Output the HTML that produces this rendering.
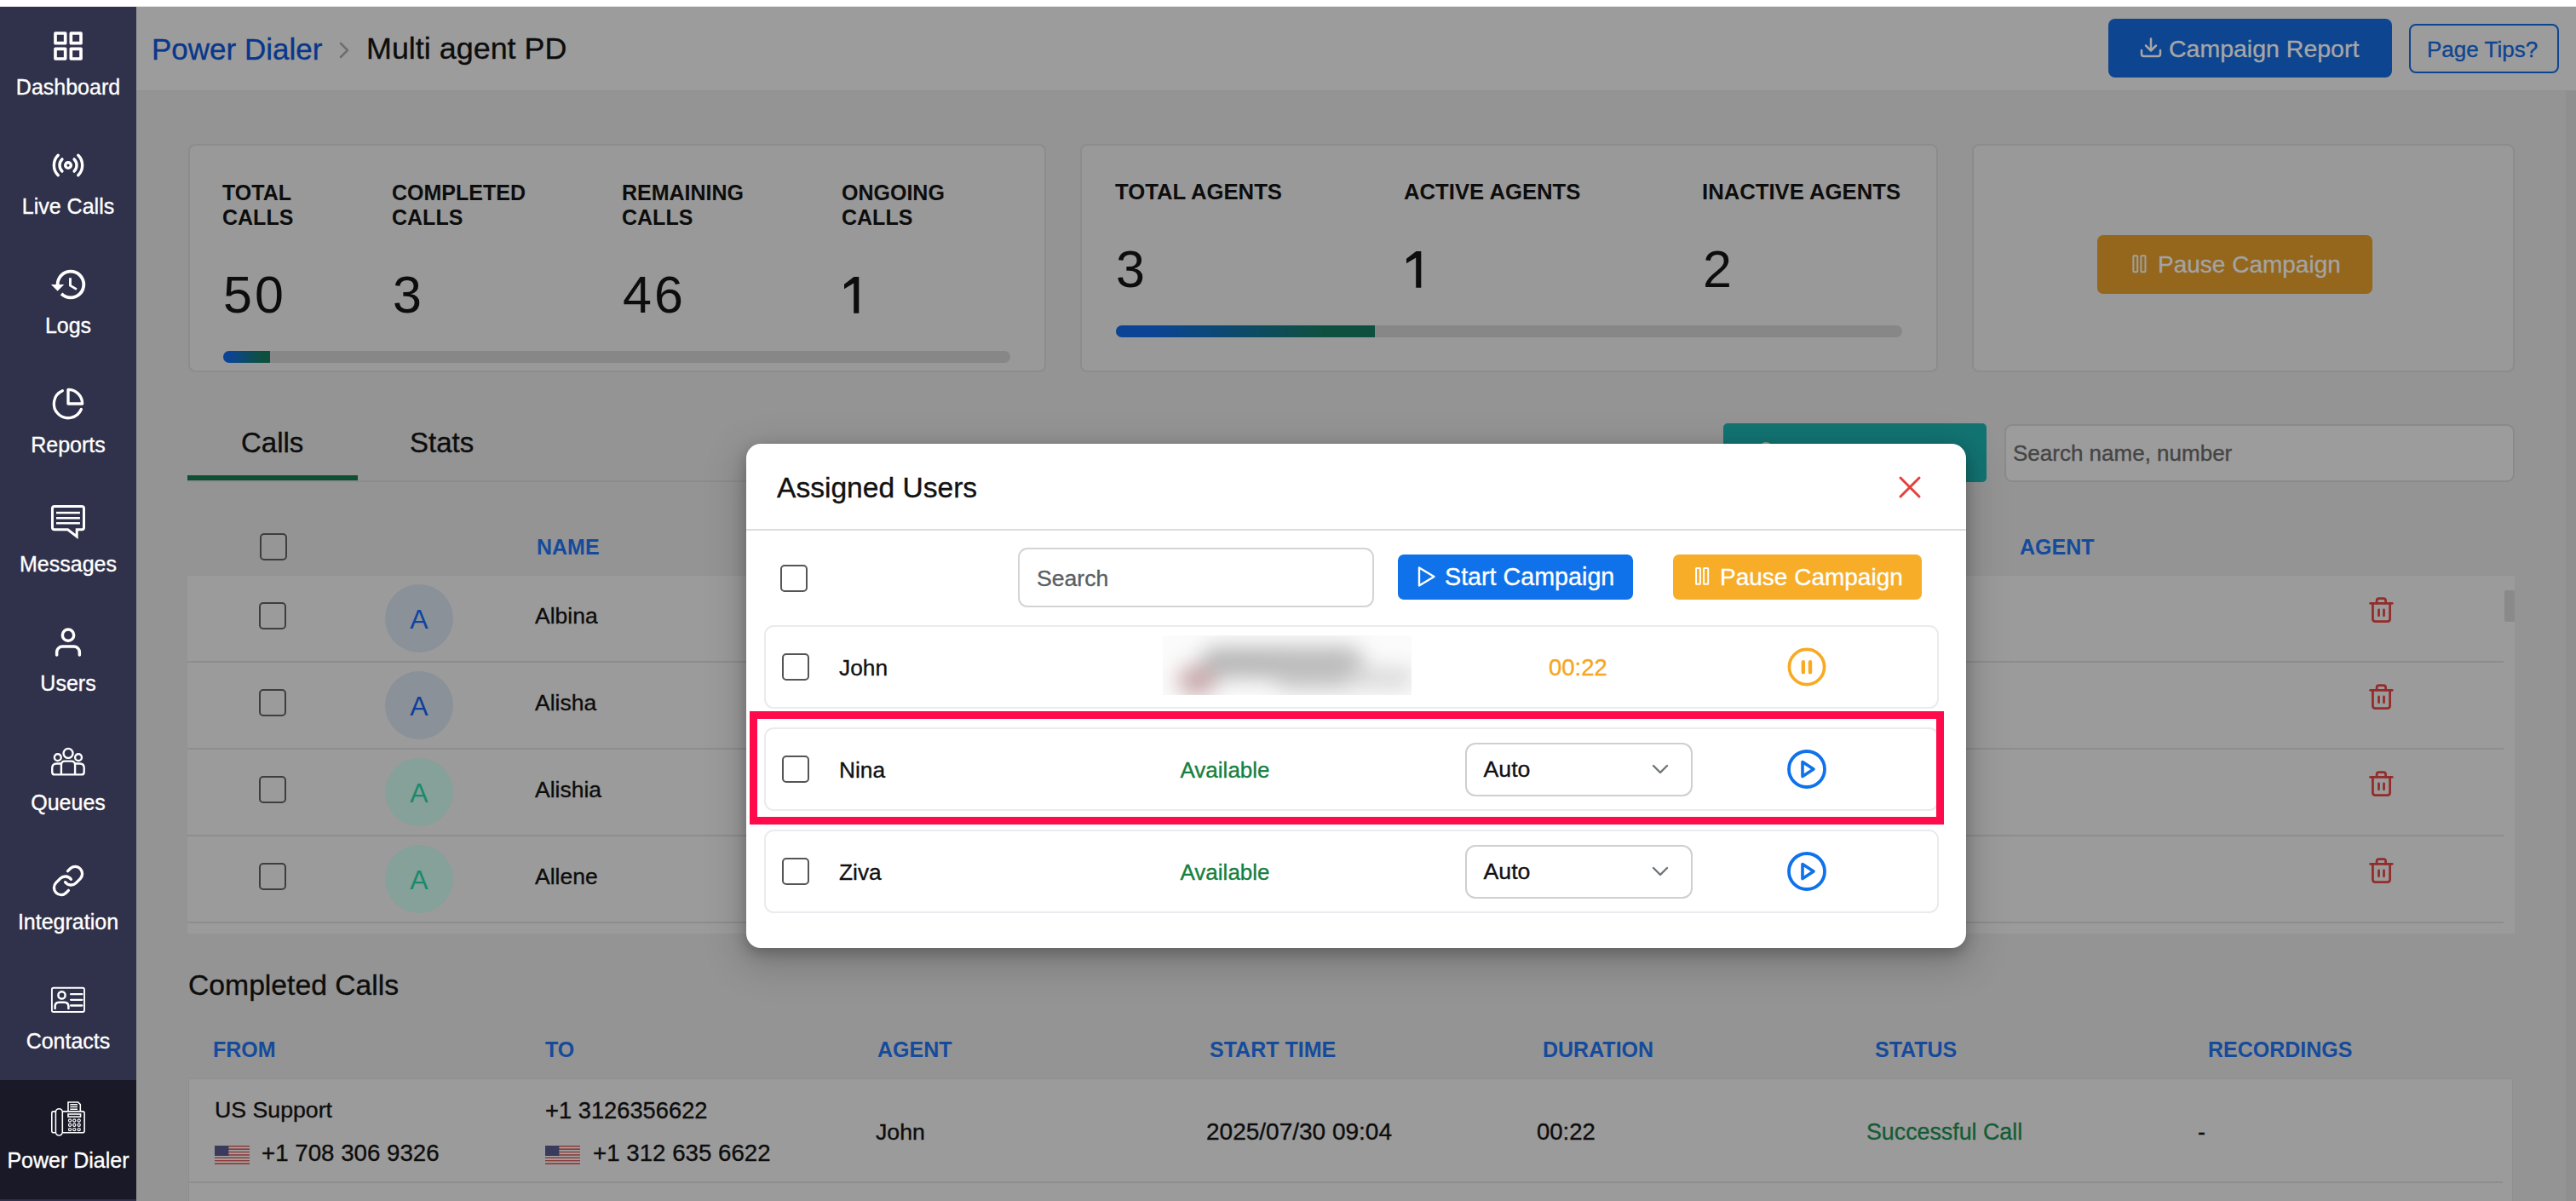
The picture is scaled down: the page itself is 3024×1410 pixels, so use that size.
<!DOCTYPE html>
<html><head><meta charset="utf-8"><title>Power Dialer</title>
<style>
html,body{margin:0;padding:0;}
body{width:3024px;height:1410px;position:relative;overflow:hidden;background:#969696;font-family:"Liberation Sans", sans-serif;}
.t{position:absolute;white-space:nowrap;}
.s{-webkit-text-stroke:0.35px currentColor;}
.r{position:absolute;}
</style></head><body>
<div class="r" style="left:0px;top:0px;width:3024px;height:8px;background:#ffffff;"></div>
<div class="r" style="left:0px;top:7px;width:3024px;height:1px;background:#e6e6e6;"></div>
<div class="r" style="left:160px;top:8px;width:2864px;height:98px;background:#9c9c9c;"></div>
<div class="r" style="left:160px;top:106px;width:2864px;height:2px;background:#939393;"></div>
<div class="r" style="left:160px;top:108px;width:2864px;height:1302px;background:#949494;"></div>
<div class="r" style="left:3012px;top:106px;width:12px;height:1304px;background:#8f8f8f;"></div>
<div class="r" style="left:0px;top:8px;width:160px;height:1402px;background:#30314a;"></div>
<div class="r" style="left:0px;top:1268px;width:160px;height:140px;background:#191927;"></div>
<div class="t s" style="left:0px;top:89.84px;font-size:25px;line-height:25px;color:#ffffff;font-weight:400;width:160px;text-align:center;">Dashboard</div>
<div class="t s" style="left:0px;top:229.84px;font-size:25px;line-height:25px;color:#ffffff;font-weight:400;width:160px;text-align:center;">Live Calls</div>
<div class="t s" style="left:0px;top:369.84px;font-size:25px;line-height:25px;color:#ffffff;font-weight:400;width:160px;text-align:center;">Logs</div>
<div class="t s" style="left:0px;top:509.84px;font-size:25px;line-height:25px;color:#ffffff;font-weight:400;width:160px;text-align:center;">Reports</div>
<div class="t s" style="left:0px;top:649.84px;font-size:25px;line-height:25px;color:#ffffff;font-weight:400;width:160px;text-align:center;">Messages</div>
<div class="t s" style="left:0px;top:789.84px;font-size:25px;line-height:25px;color:#ffffff;font-weight:400;width:160px;text-align:center;">Users</div>
<div class="t s" style="left:0px;top:929.84px;font-size:25px;line-height:25px;color:#ffffff;font-weight:400;width:160px;text-align:center;">Queues</div>
<div class="t s" style="left:0px;top:1069.84px;font-size:25px;line-height:25px;color:#ffffff;font-weight:400;width:160px;text-align:center;">Integration</div>
<div class="t s" style="left:0px;top:1209.84px;font-size:25px;line-height:25px;color:#ffffff;font-weight:400;width:160px;text-align:center;">Contacts</div>
<div class="t s" style="left:0px;top:1349.84px;font-size:25px;line-height:25px;color:#ffffff;font-weight:400;width:160px;text-align:center;">Power Dialer</div>
<svg class="r" style="left:60px;top:34.3px;width:40px;height:40px;overflow:visible" viewBox="0 0 24 24" fill="none" stroke="#fff" stroke-linecap="round" stroke-linejoin="round" stroke-width="2.2"><rect x="3" y="3" width="7" height="7"/><rect x="14" y="3" width="7" height="7"/><rect x="14" y="14" width="7" height="7"/><rect x="3" y="14" width="7" height="7"/></svg>
<svg class="r" style="left:60px;top:174.3px;width:40px;height:40px;overflow:visible" viewBox="0 0 24 24" fill="none" stroke="#fff" stroke-linecap="round" stroke-linejoin="round" stroke-width="2.05"><circle cx="12" cy="12" r="2"/><path d="M16.24 7.76a6 6 0 0 1 0 8.49m-8.48-.01a6 6 0 0 1 0-8.49m11.31-2.82a10 10 0 0 1 0 14.14m-14.14 0a10 10 0 0 1 0-14.14"/></svg>
<svg class="r" style="left:57.9px;top:310.5px;width:46.08px;height:46.08px;overflow:visible" viewBox="0 0 24 24" ><path fill="#fff" d="M13 3a9 9 0 0 0-9 9H1l3.89 3.89.07.14L9 12H6c0-3.87 3.13-7 7-7s7 3.13 7 7-3.13 7-7 7c-1.93 0-3.68-.79-4.94-2.06l-1.42 1.42A8.954 8.954 0 0 0 13 21a9 9 0 0 0 0-18zm-1 5v5l4.28 2.54.72-1.21-3.5-2.08V8H12z"/></svg>
<svg class="r" style="left:60px;top:454.3px;width:40px;height:40px;overflow:visible" viewBox="0 0 24 24" fill="none" stroke="#fff" stroke-linecap="round" stroke-linejoin="round" stroke-width="2"><path d="M21.21 15.89A10 10 0 1 1 8 2.83"/><path d="M22 12A10 10 0 0 0 12 2v10z"/></svg>
<svg class="r" style="left:50px;top:583px;width:60px;height:60px;overflow:visible" viewBox="0 0 60 60" fill="none" stroke="#fff"><path d="M14 11.54 H46 Q48.5 11.54 48.5 14 V36.3 Q48.5 38.8 46 38.8 H40.2 V47 L29.6 38.8 H14 Q11.45 38.8 11.45 36.3 V14 Q11.45 11.54 14 11.54 Z" stroke-width="3" stroke-linejoin="miter"/><path d="M16 18.95 H43.9 M16 25.2 H43.9 M16 31.2 H43.9" stroke-width="2.6" stroke-linecap="butt"/></svg>
<svg class="r" style="left:60px;top:734.3px;width:40px;height:40px;overflow:visible" viewBox="0 0 24 24" fill="none" stroke="#fff" stroke-linecap="round" stroke-linejoin="round" stroke-width="2.1"><path d="M20 21v-2a4 4 0 0 0-4-4H8a4 4 0 0 0-4 4v2"/><circle cx="12" cy="7" r="4"/></svg>
<svg class="r" style="left:50px;top:863px;width:60px;height:60px;overflow:visible" viewBox="0 0 60 60" fill="none" stroke="#fff" stroke-width="2.4" stroke-linejoin="round"><circle cx="30.06" cy="21.4" r="5.5"/><circle cx="17.8" cy="26.2" r="3.9"/><circle cx="42.05" cy="26.2" r="3.9"/><path d="M21.9 46.4 V35 Q21.9 30.6 26.3 30.6 H33.7 Q38.1 30.6 38.1 35 V46.4"/><path d="M21.9 33.5 H16.25 Q11.25 33.5 11.25 38.5 V43.4 Q11.25 46.4 14.25 46.4 H45.7 Q48.7 46.4 48.7 43.4 V38.5 Q48.7 33.5 43.7 33.5 H38.1"/></svg>
<svg class="r" style="left:60px;top:1014.3px;width:40px;height:40px;overflow:visible" viewBox="0 0 24 24" fill="none" stroke="#fff" stroke-linecap="round" stroke-linejoin="round" stroke-width="2"><path d="M10 13a5 5 0 0 0 7.54.54l3-3a5 5 0 0 0-7.07-7.07l-1.72 1.71"/><path d="M14 11a5 5 0 0 0-7.54-.54l-3 3a5 5 0 0 0 7.07 7.07l1.71-1.71"/></svg>
<svg class="r" style="left:50px;top:1143px;width:60px;height:60px;overflow:visible" viewBox="0 0 60 60" fill="none" stroke="#fff"><rect x="10.9" y="16.7" width="38.1" height="28.3" rx="2" stroke-width="1.9"/><circle cx="22.5" cy="25.4" r="4.1" stroke-width="2.5"/><path d="M14.6 41 V38.5 Q14.6 33.7 19.4 33.7 H25.6 Q30.4 33.7 30.4 38.5 V41" stroke-width="2.5" stroke-linecap="round"/><path d="M33.1 24.2 H46.4 M33.1 30.8 H46.4 M33.1 37.5 H46.4" stroke-width="2.3" stroke-linecap="round"/></svg>
<svg class="r" style="left:50px;top:1283px;width:60px;height:60px;overflow:visible" viewBox="0 0 60 60" fill="none" stroke="#fff" stroke-width="1.6"><rect x="15.4" y="18.7" width="7.9" height="31.3" rx="3.95"/><path d="M15.4 21.9 H12.8 Q10.8 21.9 10.8 23.9 V44.8 Q10.8 46.8 12.8 46.8 H15.4"/><path d="M23.3 21.9 H47.1 Q49.1 21.9 49.1 23.9 V44.8 Q49.1 46.8 47.1 46.8 H23.3"/><path d="M30 21.9 V11 H41.6 L44.3 13.7 V21.9"/><path d="M32.3 13.7 H41 M32.3 16.4 H41 M32.3 19.2 H41" stroke-width="1.5"/><rect x="30" y="25" width="14.55" height="3.1"/><circle cx="32.06" cy="32.5" r="1.6" stroke-width="1.2"/><circle cx="32.06" cy="37.7" r="1.6" stroke-width="1.2"/><circle cx="32.06" cy="43.1" r="1.6" stroke-width="1.2"/><circle cx="37.26" cy="32.5" r="1.6" stroke-width="1.2"/><circle cx="37.26" cy="37.7" r="1.6" stroke-width="1.2"/><circle cx="37.26" cy="43.1" r="1.6" stroke-width="1.2"/><circle cx="42.68" cy="32.5" r="1.6" stroke-width="1.2"/><circle cx="42.68" cy="37.7" r="1.6" stroke-width="1.2"/><circle cx="42.68" cy="43.1" r="1.6" stroke-width="1.2"/></svg>
<div class="t s" style="left:178px;top:40.37px;font-size:35px;line-height:35px;color:#08378b;font-weight:400;">Power Dialer</div>
<svg class="r" style="left:396px;top:48px;width:16px;height:22px" viewBox="0 0 16 22" fill="none" stroke="#6f6f6f" stroke-width="2.6" stroke-linecap="round" stroke-linejoin="round"><path d="M4 3 L12 11 L4 19"/></svg>
<div class="t s" style="left:430px;top:39.61px;font-size:35.9px;line-height:35.9px;color:#0d0d0d;font-weight:400;">Multi agent PD</div>
<div class="r" style="left:2475px;top:22px;width:333px;height:69px;background:#0d4590;border-radius:8px;"></div>
<svg class="r" style="left:2511px;top:43px;width:28px;height:28px" viewBox="0 0 28 28" fill="none" stroke="#a6a6a6" stroke-width="2.5" stroke-linecap="round" stroke-linejoin="round"><path d="M3 16 V20.6 Q3 23 5.4 23 H22.6 Q25 23 25 20.6 V16"/><path d="M14 2.5 V16.5 M8 10.5 L14 16.5 L20 10.5"/></svg>
<div class="t s" style="left:2546px;top:42.87px;font-size:28.5px;line-height:28.5px;color:#a6a6a6;font-weight:400;">Campaign Report</div>
<div class="r" style="left:2828px;top:28px;width:176px;height:58px;border:2px solid #0d4590;border-radius:8px;box-sizing:border-box;"></div>
<div class="t s" style="left:2849px;top:44.99px;font-size:26px;line-height:26px;color:#0d4590;font-weight:400;">Page Tips?</div>
<div class="r" style="left:221px;top:169px;width:1007px;height:268px;background:#999999;border:2px solid #8c8c8c;border-radius:8px;box-sizing:border-box;"></div>
<div class="r" style="left:1268px;top:169px;width:1007px;height:268px;background:#999999;border:2px solid #8c8c8c;border-radius:8px;box-sizing:border-box;"></div>
<div class="r" style="left:2315px;top:169px;width:637px;height:268px;background:#999999;border:2px solid #8c8c8c;border-radius:8px;box-sizing:border-box;"></div>
<div class="t" style="left:261px;top:213.84px;font-size:25px;line-height:25px;color:#0d0d0d;font-weight:700;">TOTAL</div>
<div class="t" style="left:261px;top:243.34px;font-size:25px;line-height:25px;color:#0d0d0d;font-weight:700;">CALLS</div>
<div class="t" style="left:460px;top:213.84px;font-size:25px;line-height:25px;color:#0d0d0d;font-weight:700;">COMPLETED</div>
<div class="t" style="left:460px;top:243.34px;font-size:25px;line-height:25px;color:#0d0d0d;font-weight:700;">CALLS</div>
<div class="t" style="left:730px;top:213.84px;font-size:25px;line-height:25px;color:#0d0d0d;font-weight:700;">REMAINING</div>
<div class="t" style="left:730px;top:243.34px;font-size:25px;line-height:25px;color:#0d0d0d;font-weight:700;">CALLS</div>
<div class="t" style="left:988px;top:213.84px;font-size:25px;line-height:25px;color:#0d0d0d;font-weight:700;">ONGOING</div>
<div class="t" style="left:988px;top:243.34px;font-size:25px;line-height:25px;color:#0d0d0d;font-weight:700;">CALLS</div>
<div class="t" style="left:262px;top:315.86px;font-size:61px;line-height:61px;color:#0d0d0d;font-weight:400;letter-spacing:3px;">50</div>
<div class="t" style="left:461px;top:315.86px;font-size:61px;line-height:61px;color:#0d0d0d;font-weight:400;letter-spacing:3px;">3</div>
<div class="t" style="left:731px;top:315.86px;font-size:61px;line-height:61px;color:#0d0d0d;font-weight:400;letter-spacing:3px;">46</div>
<div class="r" style="left:262px;top:412px;width:924px;height:14px;background:#878787;border-radius:7px;"></div>
<div class="r" style="left:262px;top:412px;width:55px;height:14px;background:linear-gradient(90deg,#0b4494 15%,#0e5040 80%);border-radius:7px 0 0 7px;"></div>
<div class="t" style="left:1309px;top:213.24px;font-size:25.7px;line-height:25.7px;color:#0d0d0d;font-weight:700;">TOTAL AGENTS</div>
<div class="t" style="left:1648px;top:213.24px;font-size:25.7px;line-height:25.7px;color:#0d0d0d;font-weight:700;">ACTIVE AGENTS</div>
<div class="t" style="left:1998px;top:213.24px;font-size:25.7px;line-height:25.7px;color:#0d0d0d;font-weight:700;">INACTIVE AGENTS</div>
<div class="t" style="left:1310px;top:286.36px;font-size:61px;line-height:61px;color:#0d0d0d;font-weight:400;letter-spacing:3px;">3</div>
<div class="t" style="left:1999px;top:286.36px;font-size:61px;line-height:61px;color:#0d0d0d;font-weight:400;letter-spacing:3px;">2</div>
<div class="r" style="left:1310px;top:382px;width:923px;height:14px;background:#878787;border-radius:7px;"></div>
<div class="r" style="left:1310px;top:382px;width:304px;height:14px;background:linear-gradient(90deg,#0b4494 15%,#0e5040 80%);border-radius:7px 0 0 7px;"></div>
<svg class="r" style="left:990.8px;top:325px;width:18px;height:43px" viewBox="0 0 18 43"><path fill="#0d0d0d" d="M0 8.8 L11.4 0 H17.3 V42.8 H11.2 V7.4 L0 14.3 Z"/></svg>
<svg class="r" style="left:1650.5px;top:295px;width:18px;height:43px" viewBox="0 0 18 43"><path fill="#0d0d0d" d="M0 8.8 L11.4 0 H17.3 V42.8 H11.2 V7.4 L0 14.3 Z"/></svg>
<div class="r" style="left:2462px;top:276px;width:323px;height:69px;background:#94671c;border-radius:7px;"></div>
<svg class="r" style="left:2500px;top:297px;width:22px;height:26px" viewBox="0 0 22 26" fill="none" stroke="#a0a0a0" stroke-width="2"><rect x="4.4" y="3.3" width="4.8" height="18.9" rx="0.6"/><rect x="13.4" y="3.3" width="5.1" height="18.9" rx="0.6"/></svg>
<div class="t s" style="left:2533px;top:297.30px;font-size:28px;line-height:28px;color:#a3a3a3;font-weight:400;">Pause Campaign</div>
<div class="t s" style="left:283px;top:503.07px;font-size:33px;line-height:33px;color:#0d0d0d;font-weight:400;">Calls</div>
<div class="t s" style="left:481px;top:503.07px;font-size:33px;line-height:33px;color:#0d0d0d;font-weight:400;">Stats</div>
<div class="r" style="left:220px;top:564px;width:1680px;height:2px;background:#8c8c8c;"></div>
<div class="r" style="left:220px;top:558px;width:200px;height:6px;background:#0f5035;"></div>
<div class="r" style="left:2023px;top:497px;width:309px;height:69px;background:#127472;border-radius:5px;"></div>
<div class="r" style="left:2065px;top:519px;width:16px;height:16px;border-radius:50%;background:#9a9a9a;"></div>
<div class="r" style="left:2353px;top:498px;width:599px;height:68px;background:#9c9c9c;border:2px solid #8a8a8a;border-radius:9px;box-sizing:border-box;"></div>
<div class="t s" style="left:2363px;top:518.74px;font-size:26px;line-height:26px;color:#454545;font-weight:400;">Search name, number</div>
<div class="r" style="left:305px;top:626px;width:32px;height:32px;border:2px solid #3e3e3e;border-radius:5px;box-sizing:border-box;background:#969696;"></div>
<div class="t" style="left:630px;top:629.84px;font-size:25px;line-height:25px;color:#164b9c;font-weight:700;">NAME</div>
<div class="t" style="left:2371px;top:629.84px;font-size:25px;line-height:25px;color:#164b9c;font-weight:700;">AGENT</div>
<div class="r" style="left:220px;top:676px;width:2732px;height:420px;background:#9b9b9b;"></div>
<div class="r" style="left:304px;top:706.5px;width:32px;height:32.0px;border:2px solid #3e3e3e;border-radius:5px;box-sizing:border-box;background:#9b9b9b;"></div>
<div class="r" style="left:452px;top:686px;width:80px;height:80px;border-radius:50%;background:#8a9199;"></div>
<div class="t" style="left:452px;top:711.41px;font-size:32px;line-height:32px;color:#0f45a0;font-weight:400;width:80px;text-align:center;">A</div>
<div class="t s" style="left:628px;top:710.07px;font-size:26.5px;line-height:26.5px;color:#0d0d0d;font-weight:400;">Albina</div>
<div class="r" style="left:220px;top:776px;width:2719px;height:2px;background:#8d8d8d;"></div>
<svg class="r" style="left:2779px;top:696.5px;width:34px;height:38px" viewBox="0 0 34 38" fill="none" stroke="#932d2b" stroke-width="2.8" stroke-linecap="round" stroke-linejoin="round"><path d="M3.6 11.3 H29.2"/><path d="M11.1 11.3 V8.2 Q11.1 5.6 13.7 5.6 H19 Q21.6 5.6 21.6 8.2 V11.3"/><path d="M6.4 11.3 V29.6 Q6.4 32.6 9.4 32.6 H23.6 Q26.6 32.6 26.6 29.6 V11.3"/><path d="M13.5 19 V25.8 M19.5 19 V25.8"/></svg>
<div class="r" style="left:304px;top:808.5px;width:32px;height:32.0px;border:2px solid #3e3e3e;border-radius:5px;box-sizing:border-box;background:#9b9b9b;"></div>
<div class="r" style="left:452px;top:788px;width:80px;height:80px;border-radius:50%;background:#8a9199;"></div>
<div class="t" style="left:452px;top:813.41px;font-size:32px;line-height:32px;color:#0f3f9a;font-weight:400;width:80px;text-align:center;">A</div>
<div class="t s" style="left:628px;top:812.07px;font-size:26.5px;line-height:26.5px;color:#0d0d0d;font-weight:400;">Alisha</div>
<div class="r" style="left:220px;top:878px;width:2719px;height:2px;background:#8d8d8d;"></div>
<svg class="r" style="left:2779px;top:798.5px;width:34px;height:38px" viewBox="0 0 34 38" fill="none" stroke="#932d2b" stroke-width="2.8" stroke-linecap="round" stroke-linejoin="round"><path d="M3.6 11.3 H29.2"/><path d="M11.1 11.3 V8.2 Q11.1 5.6 13.7 5.6 H19 Q21.6 5.6 21.6 8.2 V11.3"/><path d="M6.4 11.3 V29.6 Q6.4 32.6 9.4 32.6 H23.6 Q26.6 32.6 26.6 29.6 V11.3"/><path d="M13.5 19 V25.8 M19.5 19 V25.8"/></svg>
<div class="r" style="left:304px;top:910.5px;width:32px;height:32.0px;border:2px solid #3e3e3e;border-radius:5px;box-sizing:border-box;background:#9b9b9b;"></div>
<div class="r" style="left:452px;top:890px;width:80px;height:80px;border-radius:50%;background:#86a09a;"></div>
<div class="t" style="left:452px;top:915.41px;font-size:32px;line-height:32px;color:#1a8a6a;font-weight:400;width:80px;text-align:center;">A</div>
<div class="t s" style="left:628px;top:914.07px;font-size:26.5px;line-height:26.5px;color:#0d0d0d;font-weight:400;">Alishia</div>
<div class="r" style="left:220px;top:980px;width:2719px;height:2px;background:#8d8d8d;"></div>
<svg class="r" style="left:2779px;top:900.5px;width:34px;height:38px" viewBox="0 0 34 38" fill="none" stroke="#932d2b" stroke-width="2.8" stroke-linecap="round" stroke-linejoin="round"><path d="M3.6 11.3 H29.2"/><path d="M11.1 11.3 V8.2 Q11.1 5.6 13.7 5.6 H19 Q21.6 5.6 21.6 8.2 V11.3"/><path d="M6.4 11.3 V29.6 Q6.4 32.6 9.4 32.6 H23.6 Q26.6 32.6 26.6 29.6 V11.3"/><path d="M13.5 19 V25.8 M19.5 19 V25.8"/></svg>
<div class="r" style="left:304px;top:1012.5px;width:32px;height:32.0px;border:2px solid #3e3e3e;border-radius:5px;box-sizing:border-box;background:#9b9b9b;"></div>
<div class="r" style="left:452px;top:992px;width:80px;height:80px;border-radius:50%;background:#86a09a;"></div>
<div class="t" style="left:452px;top:1017.41px;font-size:32px;line-height:32px;color:#1a8a6a;font-weight:400;width:80px;text-align:center;">A</div>
<div class="t s" style="left:628px;top:1016.07px;font-size:26.5px;line-height:26.5px;color:#0d0d0d;font-weight:400;">Allene</div>
<div class="r" style="left:220px;top:1082px;width:2719px;height:2px;background:#8d8d8d;"></div>
<svg class="r" style="left:2779px;top:1002.5px;width:34px;height:38px" viewBox="0 0 34 38" fill="none" stroke="#932d2b" stroke-width="2.8" stroke-linecap="round" stroke-linejoin="round"><path d="M3.6 11.3 H29.2"/><path d="M11.1 11.3 V8.2 Q11.1 5.6 13.7 5.6 H19 Q21.6 5.6 21.6 8.2 V11.3"/><path d="M6.4 11.3 V29.6 Q6.4 32.6 9.4 32.6 H23.6 Q26.6 32.6 26.6 29.6 V11.3"/><path d="M13.5 19 V25.8 M19.5 19 V25.8"/></svg>
<div class="r" style="left:2940px;top:693px;width:12px;height:37px;background:#8a8a8a;border-radius:2px;"></div>
<div class="t s" style="left:221px;top:1140.47px;font-size:33.7px;line-height:33.7px;color:#0d0d0d;font-weight:400;">Completed Calls</div>
<div class="t" style="left:250px;top:1219.84px;font-size:25px;line-height:25px;color:#164b9c;font-weight:700;">FROM</div>
<div class="t" style="left:640px;top:1219.84px;font-size:25px;line-height:25px;color:#164b9c;font-weight:700;">TO</div>
<div class="t" style="left:1030px;top:1219.84px;font-size:25px;line-height:25px;color:#164b9c;font-weight:700;">AGENT</div>
<div class="t" style="left:1420px;top:1219.84px;font-size:25px;line-height:25px;color:#164b9c;font-weight:700;">START TIME</div>
<div class="t" style="left:1811px;top:1219.84px;font-size:25px;line-height:25px;color:#164b9c;font-weight:700;">DURATION</div>
<div class="t" style="left:2201px;top:1219.84px;font-size:25px;line-height:25px;color:#164b9c;font-weight:700;">STATUS</div>
<div class="t" style="left:2592px;top:1219.84px;font-size:25px;line-height:25px;color:#164b9c;font-weight:700;">RECORDINGS</div>
<div class="r" style="left:221px;top:1266px;width:2729px;height:123px;background:#9b9b9b;border:1.5px solid #8f8f8f;border-bottom:none;box-sizing:border-box;"></div>
<div class="r" style="left:222px;top:1387px;width:2716px;height:2px;background:#8d8d8d;"></div>
<div class="r" style="left:221px;top:1389px;width:2729px;height:21px;background:#9b9b9b;border:1.5px solid #8f8f8f;border-top:none;border-bottom:none;box-sizing:border-box;"></div>
<div class="t s" style="left:252px;top:1290.40px;font-size:26.7px;line-height:26.7px;color:#0d0d0d;font-weight:400;">US Support</div>
<svg class="r" style="left:252px;top:1345px;width:41px;height:22px" viewBox="0 0 40 22" preserveAspectRatio="none"><rect x="0" y="0.00" width="40" height="1.69" fill="#8a3b3b"/><rect x="0" y="1.69" width="40" height="1.69" fill="#a5a5a5"/><rect x="0" y="3.38" width="40" height="1.69" fill="#8a3b3b"/><rect x="0" y="5.08" width="40" height="1.69" fill="#a5a5a5"/><rect x="0" y="6.77" width="40" height="1.69" fill="#8a3b3b"/><rect x="0" y="8.46" width="40" height="1.69" fill="#a5a5a5"/><rect x="0" y="10.15" width="40" height="1.69" fill="#8a3b3b"/><rect x="0" y="11.85" width="40" height="1.69" fill="#a5a5a5"/><rect x="0" y="13.54" width="40" height="1.69" fill="#8a3b3b"/><rect x="0" y="15.23" width="40" height="1.69" fill="#a5a5a5"/><rect x="0" y="16.92" width="40" height="1.69" fill="#8a3b3b"/><rect x="0" y="18.62" width="40" height="1.69" fill="#a5a5a5"/><rect x="0" y="20.31" width="40" height="1.69" fill="#8a3b3b"/><rect x="0" y="0" width="16" height="12" fill="#3a3b5c"/></svg>
<div class="t s" style="left:307px;top:1339.85px;font-size:27.7px;line-height:27.7px;color:#0d0d0d;font-weight:400;">+1 708 306 9326</div>
<div class="t s" style="left:640px;top:1289.89px;font-size:27.3px;line-height:27.3px;color:#0d0d0d;font-weight:400;">+1 3126356622</div>
<svg class="r" style="left:640px;top:1345px;width:41px;height:22px" viewBox="0 0 40 22" preserveAspectRatio="none"><rect x="0" y="0.00" width="40" height="1.69" fill="#8a3b3b"/><rect x="0" y="1.69" width="40" height="1.69" fill="#a5a5a5"/><rect x="0" y="3.38" width="40" height="1.69" fill="#8a3b3b"/><rect x="0" y="5.08" width="40" height="1.69" fill="#a5a5a5"/><rect x="0" y="6.77" width="40" height="1.69" fill="#8a3b3b"/><rect x="0" y="8.46" width="40" height="1.69" fill="#a5a5a5"/><rect x="0" y="10.15" width="40" height="1.69" fill="#8a3b3b"/><rect x="0" y="11.85" width="40" height="1.69" fill="#a5a5a5"/><rect x="0" y="13.54" width="40" height="1.69" fill="#8a3b3b"/><rect x="0" y="15.23" width="40" height="1.69" fill="#a5a5a5"/><rect x="0" y="16.92" width="40" height="1.69" fill="#8a3b3b"/><rect x="0" y="18.62" width="40" height="1.69" fill="#a5a5a5"/><rect x="0" y="20.31" width="40" height="1.69" fill="#8a3b3b"/><rect x="0" y="0" width="16" height="12" fill="#3a3b5c"/></svg>
<div class="t s" style="left:696px;top:1339.85px;font-size:27.7px;line-height:27.7px;color:#0d0d0d;font-weight:400;">+1 312 635 6622</div>
<div class="t s" style="left:1028px;top:1315.80px;font-size:26.7px;line-height:26.7px;color:#0d0d0d;font-weight:400;">John</div>
<div class="t s" style="left:1416px;top:1314.70px;font-size:28px;line-height:28px;color:#0d0d0d;font-weight:400;">2025/07/30 09:04</div>
<div class="t s" style="left:1804px;top:1315.12px;font-size:27.5px;line-height:27.5px;color:#0d0d0d;font-weight:400;">00:22</div>
<div class="t s" style="left:2191px;top:1315.71px;font-size:26.8px;line-height:26.8px;color:#145c36;font-weight:400;">Successful Call</div>
<div class="t s" style="left:2580px;top:1315.71px;font-size:26.8px;line-height:26.8px;color:#0d0d0d;font-weight:400;">-</div>
<div class="r" style="left:876px;top:521px;width:1432px;height:592px;background:#fff;border-radius:17px;box-shadow:0 6px 16px rgba(0,0,0,0.24),0 14px 44px 8px rgba(0,0,0,0.17);"></div>
<div class="t s" style="left:912px;top:556.06px;font-size:33.6px;line-height:33.6px;color:#111111;font-weight:400;">Assigned Users</div>
<svg class="r" style="left:2228px;top:558px;width:28px;height:28px" viewBox="0 0 28 28" fill="none" stroke="#e53f3c" stroke-width="3" stroke-linecap="round"><path d="M3 3 L25 25 M25 3 L3 25"/></svg>
<div class="r" style="left:876px;top:621px;width:1432px;height:2px;background:#dddddd;"></div>
<div class="r" style="left:916px;top:663px;width:32px;height:32px;border:2px solid #555555;border-radius:5px;box-sizing:border-box;background:#fff;"></div>
<div class="r" style="left:1195px;top:643px;width:418px;height:70px;border:2px solid #d4d4d4;border-radius:11px;box-sizing:border-box;"></div>
<div class="t s" style="left:1217px;top:666.23px;font-size:26.6px;line-height:26.6px;color:#5a5f66;font-weight:400;">Search</div>
<div class="r" style="left:1641px;top:651px;width:276px;height:53px;background:#0f72ea;border-radius:7px;"></div>
<svg class="r" style="left:1663px;top:664px;width:24px;height:26px" viewBox="0 0 24 26" fill="none" stroke="#fff" stroke-width="2.4" stroke-linejoin="round"><path d="M3 2.5 L20.5 13 L3 23.5 Z"/></svg>
<div class="t s" style="left:1696px;top:663.21px;font-size:28.7px;line-height:28.7px;color:#ffffff;font-weight:400;">Start Campaign</div>
<div class="r" style="left:1964px;top:651px;width:292px;height:53px;background:#f7ad27;border-radius:7px;"></div>
<svg class="r" style="left:1988px;top:664px;width:22px;height:26px" viewBox="0 0 22 26" fill="none" stroke="#fff" stroke-width="2"><rect x="3.1" y="2.9" width="4.8" height="18.9" rx="0.6"/><rect x="12.1" y="2.9" width="5.1" height="18.9" rx="0.6"/></svg>
<div class="t s" style="left:2019px;top:663.80px;font-size:28px;line-height:28px;color:#ffffff;font-weight:400;">Pause Campaign</div>
<div class="r" style="left:897px;top:734px;width:1379px;height:98px;border:2px solid #e9ebee;border-radius:11px;box-sizing:border-box;"></div>
<div class="r" style="left:918px;top:767px;width:32px;height:32px;border:2px solid #555555;border-radius:5px;box-sizing:border-box;background:#fff;"></div>
<div class="t s" style="left:985px;top:770.74px;font-size:26.3px;line-height:26.3px;color:#111111;font-weight:400;">John</div>
<div class="r" style="left:1365px;top:746px;width:292px;height:70px;overflow:hidden;background:#fbfbfb;"><div style="position:absolute;left:-40px;top:-40px;width:372px;height:150px;filter:blur(12px);"><div style="position:absolute;left:85px;top:54px;width:190px;height:36px;border-radius:18px;background:#b6b6b6;"></div><div style="position:absolute;left:170px;top:72px;width:115px;height:30px;border-radius:15px;background:#c0c0c0;"></div><div style="position:absolute;left:255px;top:78px;width:80px;height:24px;border-radius:12px;background:#d8d8d8;"></div><div style="position:absolute;left:58px;top:76px;width:44px;height:34px;border-radius:17px;background:#c6a6a9;"></div></div></div>
<div class="t s" style="left:1818px;top:769.97px;font-size:27.5px;line-height:27.5px;color:#f5a623;font-weight:400;">00:22</div>
<svg class="r" style="left:2096.5px;top:759px;width:48px;height:48px" viewBox="0 0 48 48" fill="none" stroke="#f7aa22" stroke-width="3.7"><circle cx="24" cy="24" r="20.6"/><path d="M19.85 18.2 V30.3 M28 18.2 V30.3" stroke-width="4.4" stroke-linecap="round"/></svg>
<div class="r" style="left:897px;top:854px;width:1379px;height:98px;border:2px solid #e9ebee;border-radius:11px;box-sizing:border-box;"></div>
<div class="r" style="left:918px;top:887px;width:32px;height:32px;border:2px solid #555555;border-radius:5px;box-sizing:border-box;background:#fff;"></div>
<div class="t s" style="left:985px;top:890.74px;font-size:26.3px;line-height:26.3px;color:#111111;font-weight:400;">Nina</div>
<div class="t s" style="left:1385.5px;top:890.99px;font-size:26px;line-height:26px;color:#168040;font-weight:400;">Available</div>
<div class="r" style="left:1720px;top:872px;width:267px;height:63px;border:2px solid #cfcfcf;border-radius:12px;box-sizing:border-box;"></div>
<div class="t s" style="left:1741.5px;top:890.40px;font-size:26.7px;line-height:26.7px;color:#111111;font-weight:400;">Auto</div>
<svg class="r" style="left:1938px;top:896px;width:22px;height:14px" viewBox="0 0 22 14" fill="none" stroke="#6f7479" stroke-width="2.4" stroke-linecap="round" stroke-linejoin="round"><path d="M3 3 L11 11 L19 3"/></svg>
<svg class="r" style="left:2096.5px;top:879px;width:48px;height:48px" viewBox="0 0 48 48" fill="none" stroke="#0f72ea" stroke-width="3.8"><circle cx="24" cy="24" r="21"/><path d="M19 15.5 L32 24 L19 32.5 Z" stroke-width="3.6" stroke-linejoin="round"/></svg>
<div class="r" style="left:897px;top:974px;width:1379px;height:98px;border:2px solid #e9ebee;border-radius:11px;box-sizing:border-box;"></div>
<div class="r" style="left:918px;top:1007px;width:32px;height:32px;border:2px solid #555555;border-radius:5px;box-sizing:border-box;background:#fff;"></div>
<div class="t s" style="left:985px;top:1010.74px;font-size:26.3px;line-height:26.3px;color:#111111;font-weight:400;">Ziva</div>
<div class="t s" style="left:1385.5px;top:1010.99px;font-size:26px;line-height:26px;color:#168040;font-weight:400;">Available</div>
<div class="r" style="left:1720px;top:992px;width:267px;height:63px;border:2px solid #cfcfcf;border-radius:12px;box-sizing:border-box;"></div>
<div class="t s" style="left:1741.5px;top:1010.40px;font-size:26.7px;line-height:26.7px;color:#111111;font-weight:400;">Auto</div>
<svg class="r" style="left:1938px;top:1016px;width:22px;height:14px" viewBox="0 0 22 14" fill="none" stroke="#6f7479" stroke-width="2.4" stroke-linecap="round" stroke-linejoin="round"><path d="M3 3 L11 11 L19 3"/></svg>
<svg class="r" style="left:2096.5px;top:999px;width:48px;height:48px" viewBox="0 0 48 48" fill="none" stroke="#0f72ea" stroke-width="3.8"><circle cx="24" cy="24" r="21"/><path d="M19 15.5 L32 24 L19 32.5 Z" stroke-width="3.6" stroke-linejoin="round"/></svg>
<div class="r" style="left:880px;top:835px;width:1402px;height:133px;border:9px solid #ff0a4b;box-sizing:border-box;"></div>
</body></html>
